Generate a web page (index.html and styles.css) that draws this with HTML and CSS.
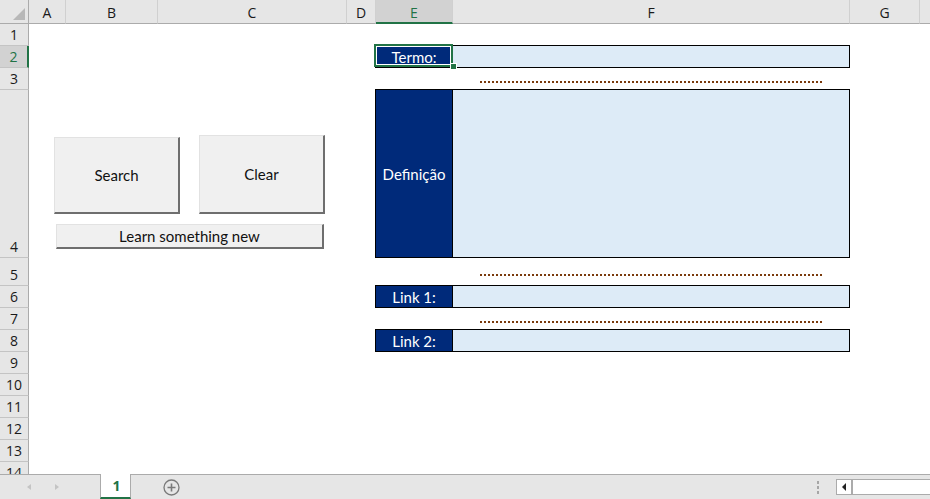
FILE: index.html
```html
<!DOCTYPE html>
<html lang="pt">
<head>
<meta charset="utf-8">
<title>Glossário</title>
<link rel="stylesheet" href="styles.css">
</head>
<body>
<div class="app">
  <div class="sheet">
    <div class="ch corner"></div>
    <div class="ch">A</div>
    <div class="ch">B</div>
    <div class="ch">C</div>
    <div class="ch">D</div>
    <div class="ch sel">E</div>
    <div class="ch">F</div>
    <div class="ch">G</div>
    <div class="ch last"></div>

    <div class="rh">1</div>
    <div class="rh sel">2</div>
    <div class="rh">3</div>
    <div class="rh">4</div>
    <div class="rh">5</div>
    <div class="rh">6</div>
    <div class="rh">7</div>
    <div class="rh">8</div>
    <div class="rh">9</div>
    <div class="rh">10</div>
    <div class="rh">11</div>
    <div class="rh">12</div>
    <div class="rh">13</div>
    <div class="rh">14</div>

    <div class="buttons">
      <div class="btn-row">
        <div class="btn btn-search">Search</div>
        <div class="btn btn-clear">Clear</div>
      </div>
      <div class="btn btn-learn">Learn something new</div>
    </div>

    <div class="field f-termo">
      <div class="lbl">Termo:</div>
      <div class="val"></div>
      <div class="selection"><span class="handle"></span></div>
    </div>
    <div class="dots d-row3"></div>
    <div class="field f-def">
      <div class="lbl">Definição</div>
      <div class="val"></div>
    </div>
    <div class="dots d-row5"></div>
    <div class="field f-link1">
      <div class="lbl">Link 1:</div>
      <div class="val"></div>
    </div>
    <div class="dots d-row7"></div>
    <div class="field f-link2">
      <div class="lbl">Link 2:</div>
      <div class="val"></div>
    </div>
  </div>

  <div class="tabbar">
    <div class="nav">
      <span class="arrow-l"></span>
      <span class="arrow-r"></span>
    </div>
    <div class="tab">1</div>
    <div class="add">
      <svg width="17" height="17" viewBox="0 0 17 17"><circle cx="8.5" cy="8.5" r="7.5" fill="none" stroke="#7a7a7a" stroke-width="1.3"/><path d="M8.5 4.5v8M4.5 8.5h8" stroke="#7a7a7a" stroke-width="1.6"/></svg>
    </div>
    <div class="spacer"></div>
    <div class="grip"><i></i><i></i><i></i></div>
    <div class="hscroll">
      <div class="sbtn"><span class="tri"></span></div>
      <div class="track"></div>
    </div>
  </div>
</div>
</body>
</html>
```
FILE: styles.css
```css
* { box-sizing: border-box; }
html, body { margin: 0; padding: 0; background: #fff; }
.app {
  width: 930px;
  height: 499px;
  overflow: hidden;
  background: #fff;
  display: flex;
  flex-direction: column;
}
.sheet {
  height: 474px;
  overflow: hidden;
  display: grid;
  grid-template-columns: 29px 37px 92px 189px 29px 77px 397px 70px 10px;
  grid-template-rows: 24px 22px 22px 22px 168px 28px repeat(9, 22px);
  flex: none;
}
.ch {
  grid-row: 1;
  background: #e6e6e6;
  border-bottom: 1px solid #ababab;
  border-right: 1px solid #d0d0d0;
  display: flex;
  align-items: center;
  justify-content: center;
  font-family: "Open Sans", "DejaVu Sans", sans-serif;
  font-size: 14px;
  color: #1a1a1a;
  padding-top: 1px;
}
.ch.last { border-right: none; }
.ch.corner {
  position: relative;
  border-right: 1px solid #ababab;
}
.ch.corner::after {
  content: "";
  position: absolute;
  right: 3px;
  bottom: 3px;
  border-left: 12px solid transparent;
  border-bottom: 12px solid #b8b8b8;
}
.ch.sel {
  background: #d2d2d2;
  color: #217346;
  border-bottom: 2px solid #217346;
  padding-top: 2px;
}
.rh {
  grid-column: 1;
  background: #e6e6e6;
  border-right: 1px solid #ababab;
  border-bottom: 1px solid #c4c4c4;
  display: flex;
  align-items: flex-end;
  justify-content: center;
  font-family: "Open Sans", "DejaVu Sans", sans-serif;
  font-size: 14px;
  line-height: 19px;
  color: #1a1a1a;
  padding-bottom: 1px;
}
.rh.sel {
  background: #d2d2d2;
  color: #217346;
  border-right: 2px solid #217346;
}

/* floating buttons */
.buttons {
  grid-column: 2 / 5;
  grid-row: 5;
  padding: 45px 0 0 25px;
  display: flex;
  flex-direction: column;
  align-items: flex-start;
}
.btn-row {
  display: flex;
  align-items: flex-end;
  gap: 19px;
}
.btn {
  background: #f0f0f0;
  border-top: 1px solid #e2e2e2;
  border-left: 1px solid #e2e2e2;
  border-right: 2px solid #6e6e6e;
  border-bottom: 2px solid #6e6e6e;
  display: flex;
  align-items: center;
  justify-content: center;
  font-family: Lato, "Open Sans", sans-serif;
  font-size: 15px;
  color: #111;
}
.btn-search { width: 126px; height: 77px; }
.btn-clear { width: 126px; height: 79px; }
.btn-learn {
  width: 268px;
  height: 25px;
  margin: 10px 0 0 2px;
}

/* input fields */
.field {
  grid-column: 6 / 8;
  align-self: start;
  margin: -1px 0 0 -1px;
  height: 23px;
  border: 1px solid #000;
  display: flex;
  position: relative;
}
.f-termo { grid-row: 3; }
.f-def { grid-row: 5; height: 169px; }
.f-link1 { grid-row: 7; }
.f-link2 { grid-row: 9; }
.lbl {
  width: 77px;
  flex: none;
  border-right: 1px solid #000;
  background: #002a7a;
  color: #fff;
  display: flex;
  align-items: center;
  justify-content: center;
  font-family: Lato, "Open Sans", sans-serif;
  font-size: 15px;
}
.val {
  flex: 1;
  background: #ddebf7;
}
.selection {
  position: absolute;
  left: -2px;
  top: -2px;
  width: 79px;
  height: 23px;
  border: 2px solid #217346;
  box-shadow: inset 0 0 0 1px #fff;
}
.handle {
  position: absolute;
  left: 74px;
  top: 17px;
  width: 7px;
  height: 7px;
  background: #217346;
  border: 1px solid #fff;
}

.dots {
  grid-column: 7;
  align-self: start;
  margin-left: 27px;
  width: 342px;
  height: 2px;
  background: repeating-linear-gradient(90deg, #7a3a0c 0 2px, transparent 2px 4px);
}
.d-row3 { grid-row: 4; margin-top: 13px; }
.d-row5 { grid-row: 6; margin-top: 16px; }
.d-row7 { grid-row: 8; margin-top: 13px; }

/* tab bar */
.tabbar {
  height: 25px;
  flex: none;
  background: #e6e6e6;
  border-top: 1px solid #ababab;
  display: flex;
  align-items: stretch;
}
.nav {
  width: 100px;
  display: flex;
  align-items: center;
  padding-left: 27px;
  gap: 24px;
}
.arrow-l {
  width: 0; height: 0;
  border-top: 3px solid transparent;
  border-bottom: 3px solid transparent;
  border-right: 4px solid #c4c4c4;
}
.arrow-r {
  width: 0; height: 0;
  border-top: 3px solid transparent;
  border-bottom: 3px solid transparent;
  border-left: 4px solid #c4c4c4;
}
.tab {
  width: 31px;
  margin-top: -1px;
  background: #fff;
  border-left: 1px solid #ababab;
  border-right: 1px solid #ababab;
  border-bottom: 2px solid #217346;
  display: flex;
  align-items: center;
  justify-content: center;
  padding-left: 2px;
  font-family: "Open Sans", sans-serif;
  font-weight: 700;
  font-size: 14px;
  color: #217346;
}
.add {
  margin-left: 32px;
  display: flex;
  align-items: center;
}
.add svg { display: block; }
.spacer { flex: 1; }
.grip {
  width: 4px;
  display: flex;
  flex-direction: column;
  justify-content: center;
  gap: 2px;
  margin-right: 15px;
}
.grip i {
  display: block;
  width: 2px;
  height: 3px;
  background: #a6a6a6;
}
.hscroll {
  width: 94px;
  display: flex;
  align-items: center;
}
.sbtn {
  width: 16px;
  height: 16px;
  background: #fff;
  border: 1px solid #ababab;
  display: flex;
  align-items: center;
  justify-content: center;
}
.tri {
  width: 0; height: 0;
  border-top: 4px solid transparent;
  border-bottom: 4px solid transparent;
  border-right: 4px solid #222;
}
.track {
  flex: 1;
  height: 16px;
  background: #fff;
  border-top: 1px solid #ababab;
  border-bottom: 1px solid #ababab;
  border-left: 1px solid #ababab;
}
```
